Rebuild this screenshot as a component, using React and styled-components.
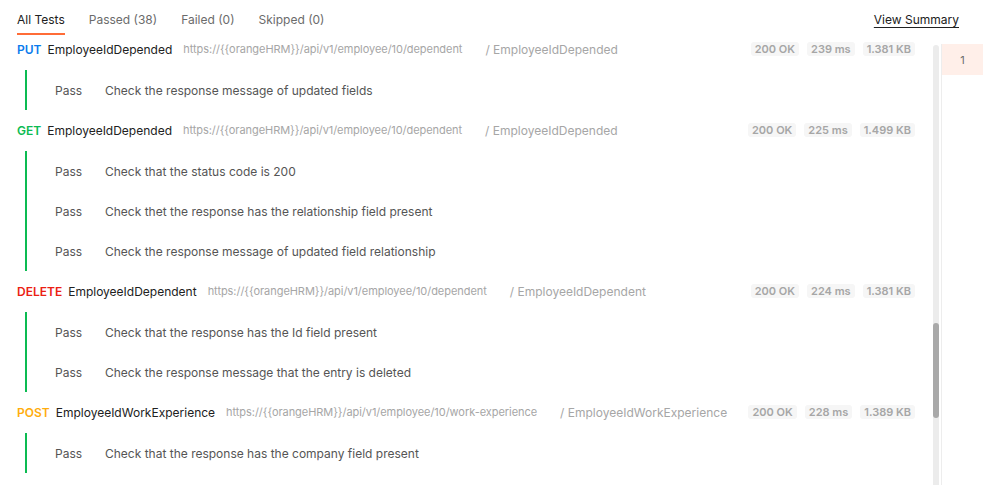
import styled, {createGlobalStyle} from "styled-components";

const GlobalStyle = createGlobalStyle`
  html, body, #root {
    margin: 0;
    height: 100%;
    overflow: hidden;
  }
  body {
    font-family: Inter, "Noto Sans", sans-serif;
    font-size: 12px;
    color: #212121;
    background: #fff;
  }
`;

const Page = styled.div`
  display: flex;
  flex-direction: column;
  height: 100%;
`;

const Header = styled.div`
  display: flex;
  justify-content: space-between;
  align-items: flex-start;
  height: 40px;
  padding: 0 32px 0 17px;
  flex-shrink: 0;
`;

const Tabs = styled.div`
  display: flex;
  gap: 24px;
`;

const Tab = styled.div`
  padding-top: 12px;
  padding-bottom: 5px;
  line-height: 16px;
  color: ${p => (p.$active ? "#212121" : "#6b6b6b")};
  border-bottom: 2px solid ${p => (p.$active ? "#ff6c37" : "transparent")};
  cursor: pointer;
`;

const SummaryLink = styled.a`
  margin-top: 12px;
  line-height: 16px;
  color: #212121;
  text-decoration: underline;
  text-underline-offset: 3px;
  cursor: pointer;
`;

const Body = styled.div`
  display: flex;
  flex: 1;
  min-height: 0;
`;

const ListViewport = styled.div`
  flex: 1;
  overflow: hidden;
`;

const List = styled.div`
  margin-top: -11px;
  padding: 0 18px 0 17px;
`;

const RequestRow = styled.div`
  display: flex;
  align-items: center;
  height: 40px;
  margin-bottom: 1px;
  white-space: nowrap;
`;

const methodColors = {
  GET: "#0cbb52",
  POST: "#ffad0d",
  PUT: "#097bed",
  DELETE: "#eb2013",
};

const Method = styled.span`
  font-weight: 600;
  color: ${p => methodColors[p.$method]};
  margin-right: 6px;
`;

const Name = styled.span`
  color: #212121;
  margin-right: 11px;
`;

const Url = styled.span`
  font-size: 11px;
  color: #a6a6a6;
  margin-right: 23px;
  letter-spacing: -0.05px;
`;

const Path = styled.span`
  color: #a6a6a6;
`;

const Stats = styled.div`
  display: flex;
  gap: 8px;
  margin-left: auto;
`;

const Badge = styled.span`
  background: #f6f6f6;
  color: #a6a6a6;
  font-weight: 600;
  font-size: 11px;
  line-height: 14px;
  padding: 0 4px;
  border-radius: 3px;
`;

const Results = styled.div`
  margin-left: 8px;
  border-left: 2px solid #0cbb52;
`;

const ResultRow = styled.div`
  display: flex;
  align-items: center;
  height: 40px;
  padding-left: 28px;
  color: #555;
`;

const Status = styled.span`
  width: 50px;
`;

const Track = styled.div`
  width: 6px;
  margin-top: 5px;
  background: #ececec;
  border-radius: 3px 3px 0 0;
`;

const Thumb = styled.div`
  width: 6px;
  height: 95px;
  margin-top: 278px;
  background: #a9a9a9;
  border-radius: 3px;
`;

const Divider = styled.div`
  width: 1px;
  margin-left: 2px;
  margin-top: 4px;
  background: #ededed;
`;

const SidePanel = styled.div`
  width: 49px;
  padding-top: 4px;
`;

const SideCell = styled.div`
  width: 41px;
  height: 31px;
  display: flex;
  align-items: center;
  justify-content: center;
  background: ${p => (p.$failed ? "#ffefe9" : "#fff")};
  color: #6b6b6b;
  font-size: 11px;
`;

const requests = [
  {
    method: "PUT",
    name: "EmployeeIdDepended",
    url: "https://{{orangeHRM}}/api/v1/employee/10/dependent",
    path: "/ EmployeeIdDepended",
    status: "200 OK",
    time: "239 ms",
    size: "1.381 KB",
    tests: ["Check the response message of updated fields"],
  },
  {
    method: "GET",
    name: "EmployeeIdDepended",
    url: "https://{{orangeHRM}}/api/v1/employee/10/dependent",
    path: "/ EmployeeIdDepended",
    status: "200 OK",
    time: "225 ms",
    size: "1.499 KB",
    tests: [
      "Check that the status code is 200",
      "Check thet the response has the relationship field present",
      "Check the response message of updated field relationship",
    ],
  },
  {
    method: "DELETE",
    name: "EmployeeIdDependent",
    url: "https://{{orangeHRM}}/api/v1/employee/10/dependent",
    path: "/ EmployeeIdDependent",
    status: "200 OK",
    time: "224 ms",
    size: "1.381 KB",
    tests: [
      "Check that the response has the Id field present",
      "Check the response message that the entry is deleted",
    ],
  },
  {
    method: "POST",
    name: "EmployeeIdWorkExperience",
    url: "https://{{orangeHRM}}/api/v1/employee/10/work-experience",
    path: "/ EmployeeIdWorkExperience",
    status: "200 OK",
    time: "228 ms",
    size: "1.389 KB",
    tests: ["Check that the response has the company field present"],
  },
];

export default function App() {
  return (
    <Page>
      <GlobalStyle />
      <Header>
        <Tabs>
          <Tab $active>All Tests</Tab>
          <Tab>Passed (38)</Tab>
          <Tab>Failed (0)</Tab>
          <Tab>Skipped (0)</Tab>
        </Tabs>
        <SummaryLink>View Summary</SummaryLink>
      </Header>
      <Body>
        <ListViewport>
          <List>
            {requests.map((req, i) => (
              <div key={i}>
                <RequestRow>
                  <Method $method={req.method}>{req.method}</Method>
                  <Name>{req.name}</Name>
                  <Url>{req.url}</Url>
                  <Path>{req.path}</Path>
                  <Stats>
                    <Badge>{req.status}</Badge>
                    <Badge>{req.time}</Badge>
                    <Badge>{req.size}</Badge>
                  </Stats>
                </RequestRow>
                <Results>
                  {req.tests.map((t, j) => (
                    <ResultRow key={j}>
                      <Status>Pass</Status>
                      {t}
                    </ResultRow>
                  ))}
                </Results>
              </div>
            ))}
          </List>
        </ListViewport>
        <Track>
          <Thumb />
        </Track>
        <Divider />
        <SidePanel>
          <SideCell $failed>1</SideCell>
        </SidePanel>
      </Body>
    </Page>
  );
}
